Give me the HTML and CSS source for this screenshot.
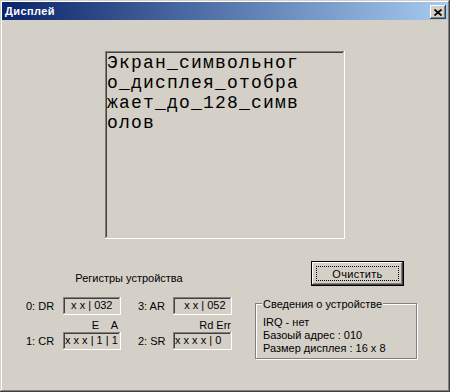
FILE: index.html
```html
<!DOCTYPE html>
<html lang="ru">
<head>
  <meta charset="UTF-8">
  <title>Дисплей</title>
  <link rel="stylesheet" href="styles.css">
</head>
<body>
  <div class="window">
    <div class="titlebar">
      <span class="title">Дисплей</span>
      <button class="close" title="Закрыть">
        <svg width="8" height="7" viewBox="0 0 8 7">
          <path d="M0.5 0.5 L7.5 6.5 M7.5 0.5 L0.5 6.5" stroke="#000" stroke-width="1.7" fill="none"/>
        </svg>
      </button>
    </div>

    <div class="client">
      <div class="screen">
        <div class="screen-text">Экран_символьного_дисплея_отображает_до_128_символов</div>
      </div>

      <div class="bottom">
        <div class="registers">
          <div class="reg-caption">Регистры устройства</div>
          <div class="reg-grid">
            <span class="reg-name">0: DR</span>
            <span class="reg-value">  x x | 032</span>
            <span class="reg-name reg-name-second">3: AR</span>
            <span class="reg-value">   x x | 052</span>

            <span></span>
            <span class="bits bits-cr">E    A</span>
            <span></span>
            <span class="bits">Rd Err</span>

            <span class="reg-name">1: CR</span>
            <span class="reg-value">x x x | 1 | 1</span>
            <span class="reg-name reg-name-second">2: SR</span>
            <span class="reg-value">x x x x | 0</span>
          </div>
        </div>

        <div class="side">
          <button class="btn"><span class="btn-focus">Очистить</span></button>
          <div class="group">
            <div class="group-title">Сведения о устройстве</div>
            <div class="group-lines">
              <div>IRQ - нет</div>
              <div>Базоый адрес : 010</div>
              <div>Размер дисплея : 16 x 8</div>
            </div>
          </div>
        </div>
      </div>
    </div>
  </div>
</body>
</html>
```

FILE: styles.css
```css
:root {
  --face: #D4D0C8;
  --shadow: #808080;
  --dark: #404040;
  --light: #FFFFFF;
}

body {
  margin: 0;
  background-color: var(--face);
  font-family: 'Liberation Sans', Arial, sans-serif;
  font-size: 11px;
  line-height: 13px;
  color: #000;
}

.window {
  width: 450px;
  height: 392px;
  box-sizing: border-box;
  padding: 2px;
  background-color: var(--face);
  box-shadow: inset -1px -1px var(--dark), inset 1px 1px var(--face),
              inset -2px -2px var(--shadow), inset 2px 2px var(--light);
}

/* title bar */
.titlebar {
  height: 18px;
  display: flex;
  align-items: flex-start;
  justify-content: space-between;
  background: linear-gradient(to right, #0A246A, #A6CAF0);
}

.title {
  color: #fff;
  font-weight: bold;
  font-size: 11px;
  line-height: 18px;
  padding-left: 3px;
  letter-spacing: 0.4px;
}

.close {
  width: 16px;
  height: 14px;
  margin: 3px 2px 0 0;
  padding: 0;
  border: none;
  display: flex;
  align-items: center;
  justify-content: center;
  background-color: var(--face);
  box-shadow: inset -1px -1px var(--dark), inset 1px 1px var(--light),
              inset -2px -2px var(--shadow), inset 2px 2px var(--face);
}

/* display */
.client {
  padding-top: 31px;
}

.screen {
  width: 240px;
  height: 188px;
  margin-left: 103px;
  box-sizing: border-box;
  padding: 2px;
  box-shadow: inset -1px -1px var(--light), inset 1px 1px var(--shadow),
              inset -2px -2px var(--face), inset 2px 2px var(--dark);
}

.screen-text {
  width: 193px;
  font-family: 'Liberation Mono', 'Courier New', monospace;
  font-size: 18px;
  letter-spacing: 1.2px;
  line-height: 20px;
  word-break: break-all;
}

/* bottom part */
.bottom {
  display: flex;
  align-items: flex-start;
  margin-top: 22px;
}

.registers {
  width: 206px;
  margin-left: 24px;
  padding-top: 11px;
}

.reg-caption {
  text-align: center;
  margin-bottom: 12px;
}

.reg-grid {
  display: grid;
  grid-template-columns: 37px 58px 52px 59px;
  grid-template-rows: 18px 17px 18px;
  align-items: center;
}

.reg-name-second {
  padding-left: 17px;
}

.reg-value {
  height: 18px;
  box-sizing: border-box;
  padding: 2px 0 0 2px;
  white-space: pre;
  overflow: hidden;
  box-shadow: inset -1px -1px var(--light), inset 1px 1px var(--shadow),
              inset -2px -2px var(--face), inset 2px 2px var(--dark);
}

.bits {
  align-self: end;
  text-align: right;
  white-space: pre;
  padding-right: 1px;
}

.bits-cr {
  padding-right: 3px;
}

.side {
  margin-left: 23px;
}

.btn {
  display: block;
  width: 93px;
  height: 25px;
  margin-left: 56px;
  padding: 4px;
  border: 1px solid #000;
  background-color: var(--face);
  font-family: inherit;
  font-size: 11px;
  box-shadow: inset -1px -1px var(--dark), inset 1px 1px var(--light),
              inset -2px -2px var(--shadow), inset 2px 2px var(--face);
}

.btn-focus {
  display: flex;
  height: 100%;
  box-sizing: border-box;
  align-items: center;
  justify-content: center;
  border: 1px dotted #000;
  letter-spacing: 0.3px;
}

.group {
  width: 162px;
  box-sizing: border-box;
  margin-top: 17px;
  padding: 0 0 3px 7px;
  border: 1px solid var(--shadow);
  box-shadow: 1px 1px 0 var(--light), inset 1px 1px 0 var(--light);
}

.group-title {
  width: max-content;
  margin: -6px 0 0 -1px;
  padding: 0 1px;
  background-color: var(--face);
}

.group-lines {
  margin-top: 5px;
}
```
